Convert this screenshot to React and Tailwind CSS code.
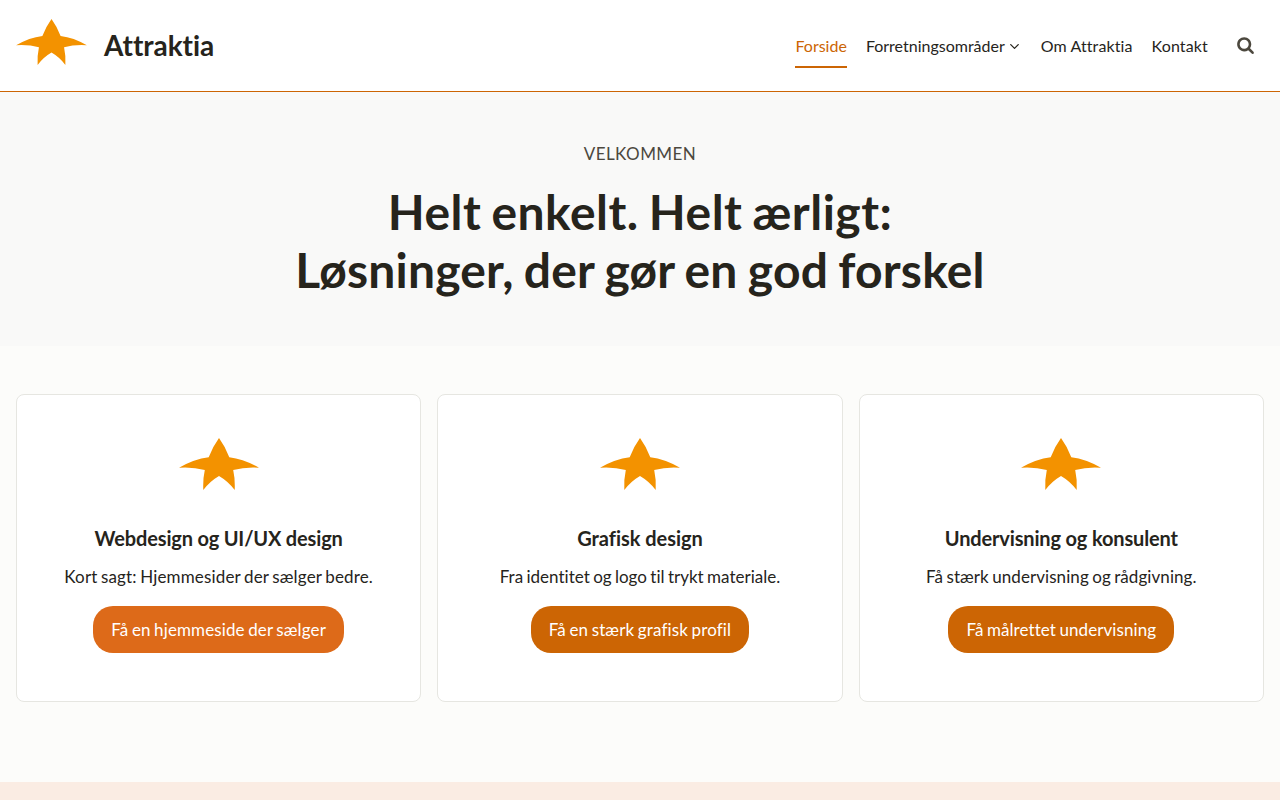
import React from 'react';

const navItems = [
  { label: 'Forside', active: true },
  { label: 'Forretningsområder', hasMenu: true },
  { label: 'Om Attraktia', spacing: 'tracking-[0.1px]' },
  { label: 'Kontakt', spacing: 'tracking-[0.15px]' },
];

const services = [
  {
    title: 'Webdesign og UI/UX design',
    text: 'Kort sagt: Hjemmesider der sælger bedre.',
    button: 'Få en hjemmeside der sælger',
    titleSpacing: 'tracking-[-0.14px] [word-spacing:-0.2px]',
    textSpacing: 'tracking-[0.15px] [word-spacing:-1px]',
    buttonStyle: 'bg-[#dd6a19] tracking-[0.12px] [word-spacing:-1px]',
  },
  {
    title: 'Grafisk design',
    text: 'Fra identitet og logo til trykt materiale.',
    button: 'Få en stærk grafisk profil',
    titleSpacing: 'tracking-[-0.02px]',
    textSpacing: 'tracking-[0.01px] [word-spacing:-1px]',
    buttonStyle: 'bg-[#cc6504] tracking-[0.14px] [word-spacing:-1px]',
  },
  {
    title: 'Undervisning og konsulent',
    text: 'Få stærk undervisning og rådgivning.',
    button: 'Få målrettet undervisning',
    titleSpacing: 'tracking-[-0.15px]',
    textSpacing: 'tracking-[0.07px] [word-spacing:-1px]',
    buttonStyle: 'bg-[#cc6504] tracking-[0.08px] [word-spacing:-1px]',
  },
];

function Star({ className }) {
  return (
    <svg viewBox="0 0 80 52" className={className} fill="#f39200" aria-hidden="true">
      <path d="M40 0Q46.500 9 50.300 19.200Q65 21 80 29.700Q66 28.800 54.200 32Q56.200 41 55.700 52Q49 43.200 40 38Q31 43.200 24.300 52Q23.800 41 25.800 32Q14 28.800 0 29.700Q15 21 29.700 19.200Q33.500 9 40 0Z" />
    </svg>
  );
}

function Header() {
  return (
    <header className="flex h-[92px] items-center justify-between border-b border-[#cc6504] bg-white pl-4 pr-[26px]">
      <a href="#" className="flex items-center">
        <Star className="mt-[-7px] h-[46px] w-[71px]" />
        <span className="mt-[-2px] ml-[17px] text-[28px] font-bold leading-[34px] tracking-[-0.05px]">Attraktia</span>
      </a>
      <div className="flex items-center">
        <nav className="flex gap-[19px] text-base">
          {navItems.map((item) => (
            <a
              key={item.label}
              href="#"
              className={`flex h-[45px] items-center border-b-2 pt-[2px] ${item.spacing || ''} ${
                item.active ? 'border-[#cc6504] text-[#cc6504]' : 'border-transparent'
              }`}
            >
              {item.label}
              {item.hasMenu && (
                <svg viewBox="0 0 24 24" className="ml-[2px] mt-[2px] h-[15px] w-[15px]" fill="currentColor">
                  <path d="M5.293 9.707l6 6c0.391 0.391 1.024 0.391 1.414 0l6-6c0.391-0.391 0.391-1.024 0-1.414s-1.024-0.391-1.414 0l-5.293 5.293-5.293-5.293c-0.391-0.391-1.024-0.391-1.414 0s-0.391 1.024 0 1.414z" />
                </svg>
              )}
            </a>
          ))}
        </nav>
        <button className="mb-px ml-[29px] text-[#4c483e]" aria-label="Søg">
          <svg viewBox="0 0 26 28" className="h-[18px] w-[17px]" fill="currentColor">
            <path d="M18 13c0-3.859-3.141-7-7-7s-7 3.141-7 7 3.141 7 7 7 7-3.141 7-7zM26 26c0 1.094-0.906 2-2 2-0.531 0-1.047-0.219-1.406-0.594l-5.359-5.344c-1.828 1.266-4.016 1.937-6.234 1.937-6.078 0-11-4.922-11-11s4.922-11 11-11 11 4.922 11 11c0 2.219-0.672 4.406-1.937 6.234l5.359 5.359c0.359 0.359 0.578 0.875 0.578 1.406z" />
          </svg>
        </button>
      </div>
    </header>
  );
}

function Hero() {
  return (
    <section className="h-[254px] bg-[#f9f9f8] pt-12 text-center">
      <p className="text-[17px] leading-[27px] tracking-[0.45px] text-[#4c483e]">VELKOMMEN</p>
      <h1 className="mt-4 text-5xl font-bold leading-[58px]">
        <span className="block tracking-[0.48px] [word-spacing:-2px]">Helt enkelt. Helt ærligt:</span>
        <span className="block tracking-[0.2px] [word-spacing:-1.7px]">Løsninger, der gør en god forskel</span>
      </h1>
    </section>
  );
}

function ServiceCard({ title, text, button, titleSpacing, textSpacing, buttonStyle }) {
  return (
    <article className="flex h-[308px] flex-col items-center rounded-lg border border-[#e6e6e1] bg-white pt-[42.5px] text-center">
      <Star className="h-[52px] w-20 shrink-0" />
      <h2 className={`mt-[33.5px] text-xl font-bold leading-[30px] ${titleSpacing}`}>{title}</h2>
      <p className={`mt-[9px] text-[17px] leading-[30px] ${textSpacing}`}>{text}</p>
      <a
        href="#"
        className={`mt-[14px] flex h-[47px] items-center rounded-[20px] px-[18px] text-[17px] text-white ${buttonStyle}`}
      >
        {button}
      </a>
    </article>
  );
}

export default function App() {
  return (
    <div className="h-[800px] overflow-hidden bg-[#fcfcfa] font-['Lato',sans-serif] text-[#26241c] [font-variant-ligatures:none]">
      <Header />
      <Hero />
      <section className="grid h-[436px] grid-cols-3 gap-4 px-4 pt-12">
        {services.map((service) => (
          <ServiceCard key={service.title} {...service} />
        ))}
      </section>
      <section className="h-[18px] bg-[#faece3]" />
    </div>
  );
}
